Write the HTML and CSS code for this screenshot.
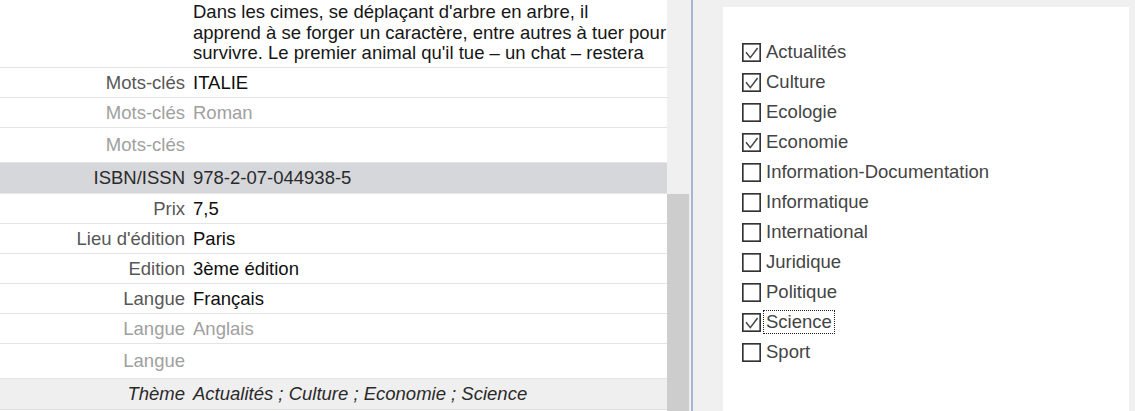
FILE: index.html
```html
<!DOCTYPE html>
<html lang="fr">
<head>
<meta charset="utf-8">
<link rel="stylesheet" href="styles.css">
</head>
<body>
<div class="page">
  <div class="table">
    <div class="row desc"><div class="lab"></div><div class="val">Dans les cimes, se déplaçant d'arbre en arbre, il<br>apprend à se forger un caractère, entre autres à tuer pour<br>survivre. Le premier animal qu'il tue – un chat – restera</div></div>
    <div class="row"><div class="lab">Mots-clés</div><div class="val">ITALIE</div></div>
    <div class="row faded"><div class="lab">Mots-clés</div><div class="val">Roman</div></div>
    <div class="row faded last"><div class="lab">Mots-clés</div><div class="val"></div></div>
    <div class="row hl"><div class="lab">ISBN/ISSN</div><div class="val">978-2-07-044938-5</div></div>
    <div class="row"><div class="lab">Prix</div><div class="val">7,5</div></div>
    <div class="row"><div class="lab">Lieu d'édition</div><div class="val">Paris</div></div>
    <div class="row"><div class="lab">Edition</div><div class="val">3ème édition</div></div>
    <div class="row"><div class="lab">Langue</div><div class="val">Français</div></div>
    <div class="row faded"><div class="lab">Langue</div><div class="val">Anglais</div></div>
    <div class="row faded last"><div class="lab">Langue</div><div class="val"></div></div>
    <div class="row theme"><div class="lab">Thème</div><div class="val">Actualités ; Culture ; Economie ; Science</div></div>
  </div>
  <div class="scroll"><div class="thumb"></div></div>
  <div class="divider"></div>
  <div class="panel">
    <ul class="checks">
      <li class="item"><svg class="box" viewBox="0 0 19 19"><rect x="0.8" y="0.8" width="17.4" height="17.4"/><path d="M4 9.3 L8.3 14.6 L15.6 5"/></svg><span class="txt">Actualités</span></li>
      <li class="item"><svg class="box" viewBox="0 0 19 19"><rect x="0.8" y="0.8" width="17.4" height="17.4"/><path d="M4 9.3 L8.3 14.6 L15.6 5"/></svg><span class="txt">Culture</span></li>
      <li class="item"><svg class="box" viewBox="0 0 19 19"><rect x="0.8" y="0.8" width="17.4" height="17.4"/></svg><span class="txt">Ecologie</span></li>
      <li class="item"><svg class="box" viewBox="0 0 19 19"><rect x="0.8" y="0.8" width="17.4" height="17.4"/><path d="M4 9.3 L8.3 14.6 L15.6 5"/></svg><span class="txt">Economie</span></li>
      <li class="item"><svg class="box" viewBox="0 0 19 19"><rect x="0.8" y="0.8" width="17.4" height="17.4"/></svg><span class="txt">Information-Documentation</span></li>
      <li class="item"><svg class="box" viewBox="0 0 19 19"><rect x="0.8" y="0.8" width="17.4" height="17.4"/></svg><span class="txt">Informatique</span></li>
      <li class="item"><svg class="box" viewBox="0 0 19 19"><rect x="0.8" y="0.8" width="17.4" height="17.4"/></svg><span class="txt">International</span></li>
      <li class="item"><svg class="box" viewBox="0 0 19 19"><rect x="0.8" y="0.8" width="17.4" height="17.4"/></svg><span class="txt">Juridique</span></li>
      <li class="item"><svg class="box" viewBox="0 0 19 19"><rect x="0.8" y="0.8" width="17.4" height="17.4"/></svg><span class="txt">Politique</span></li>
      <li class="item"><svg class="box" viewBox="0 0 19 19"><rect x="0.8" y="0.8" width="17.4" height="17.4"/><path d="M4 9.3 L8.3 14.6 L15.6 5"/></svg><span class="txt focus">Science</span></li>
      <li class="item"><svg class="box" viewBox="0 0 19 19"><rect x="0.8" y="0.8" width="17.4" height="17.4"/></svg><span class="txt">Sport</span></li>
    </ul>
  </div>
</div>
</body>
</html>
```
FILE: styles.css
```css
html, body {
  margin: 0;
  padding: 0;
}
body {
  background: #f0f0f0;
  font-family: "Liberation Sans", Arial, sans-serif;
  font-size: 18.5px;
  overflow: hidden;
}
.page {
  display: flex;
  height: 411px;
  width: 1135px;
  overflow: hidden;
}
.table {
  width: 667px;
  flex: none;
  background: #fff;
  display: flex;
  flex-direction: column;
}
.row {
  display: flex;
  align-items: center;
  height: 29px;
  border-bottom: 1px solid #e4e4e4;
  flex: none;
}
.row.last {
  height: 34px;
}
.row.desc {
  height: 67px;
  align-items: flex-start;
}
.lab {
  width: 185px;
  flex: none;
  text-align: right;
  color: #575757;
  white-space: nowrap;
}
.val {
  margin-left: 8px;
  color: #0e0e0e;
  white-space: nowrap;
}
.desc .val {
  line-height: 20.5px;
  padding-top: 2px;
  color: #161616;
}
.faded .lab,
.faded .val {
  color: #a0a0a0;
}
.row.hl {
  background: #d6d7da;
  height: 30px;
  border-bottom: 1px solid #e8e8e8;
}
.hl .lab,
.hl .val {
  color: #2a2a2a;
}
.row.theme {
  background: #efefef;
  height: 30px;
  border-bottom: 1px solid #e0e0e0;
  font-style: italic;
}
.theme .lab,
.theme .val {
  color: #2a2a2a;
}
.scroll {
  width: 24px;
  flex: none;
  background: #f0f0f0;
  display: flex;
  flex-direction: column;
}
.thumb {
  margin-top: 194px;
  width: 22px;
  flex: 1;
  background: #cdcdcd;
}
.divider {
  width: 2px;
  flex: none;
  background: #a8b6d2;
}
.panel {
  margin-left: 30px;
  margin-top: 7px;
  width: 406px;
  flex: none;
  background: #fff;
  padding: 30px 0 0 19px;
  box-sizing: border-box;
}
.checks {
  list-style: none;
  margin: 0;
  padding: 0;
}
.item {
  display: flex;
  align-items: center;
  height: 30px;
}
.box {
  width: 19px;
  height: 19px;
  flex: none;
}
.box rect {
  fill: #fff;
  stroke: #333;
  stroke-width: 1.7;
}
.box path {
  fill: none;
  stroke: #444;
  stroke-width: 1.5;
}
.txt {
  margin-left: 3px;
  padding: 0 2px;
  color: #444;
  line-height: 22px;
}
.txt.focus {
  outline: 1px dotted #222;
}
```
